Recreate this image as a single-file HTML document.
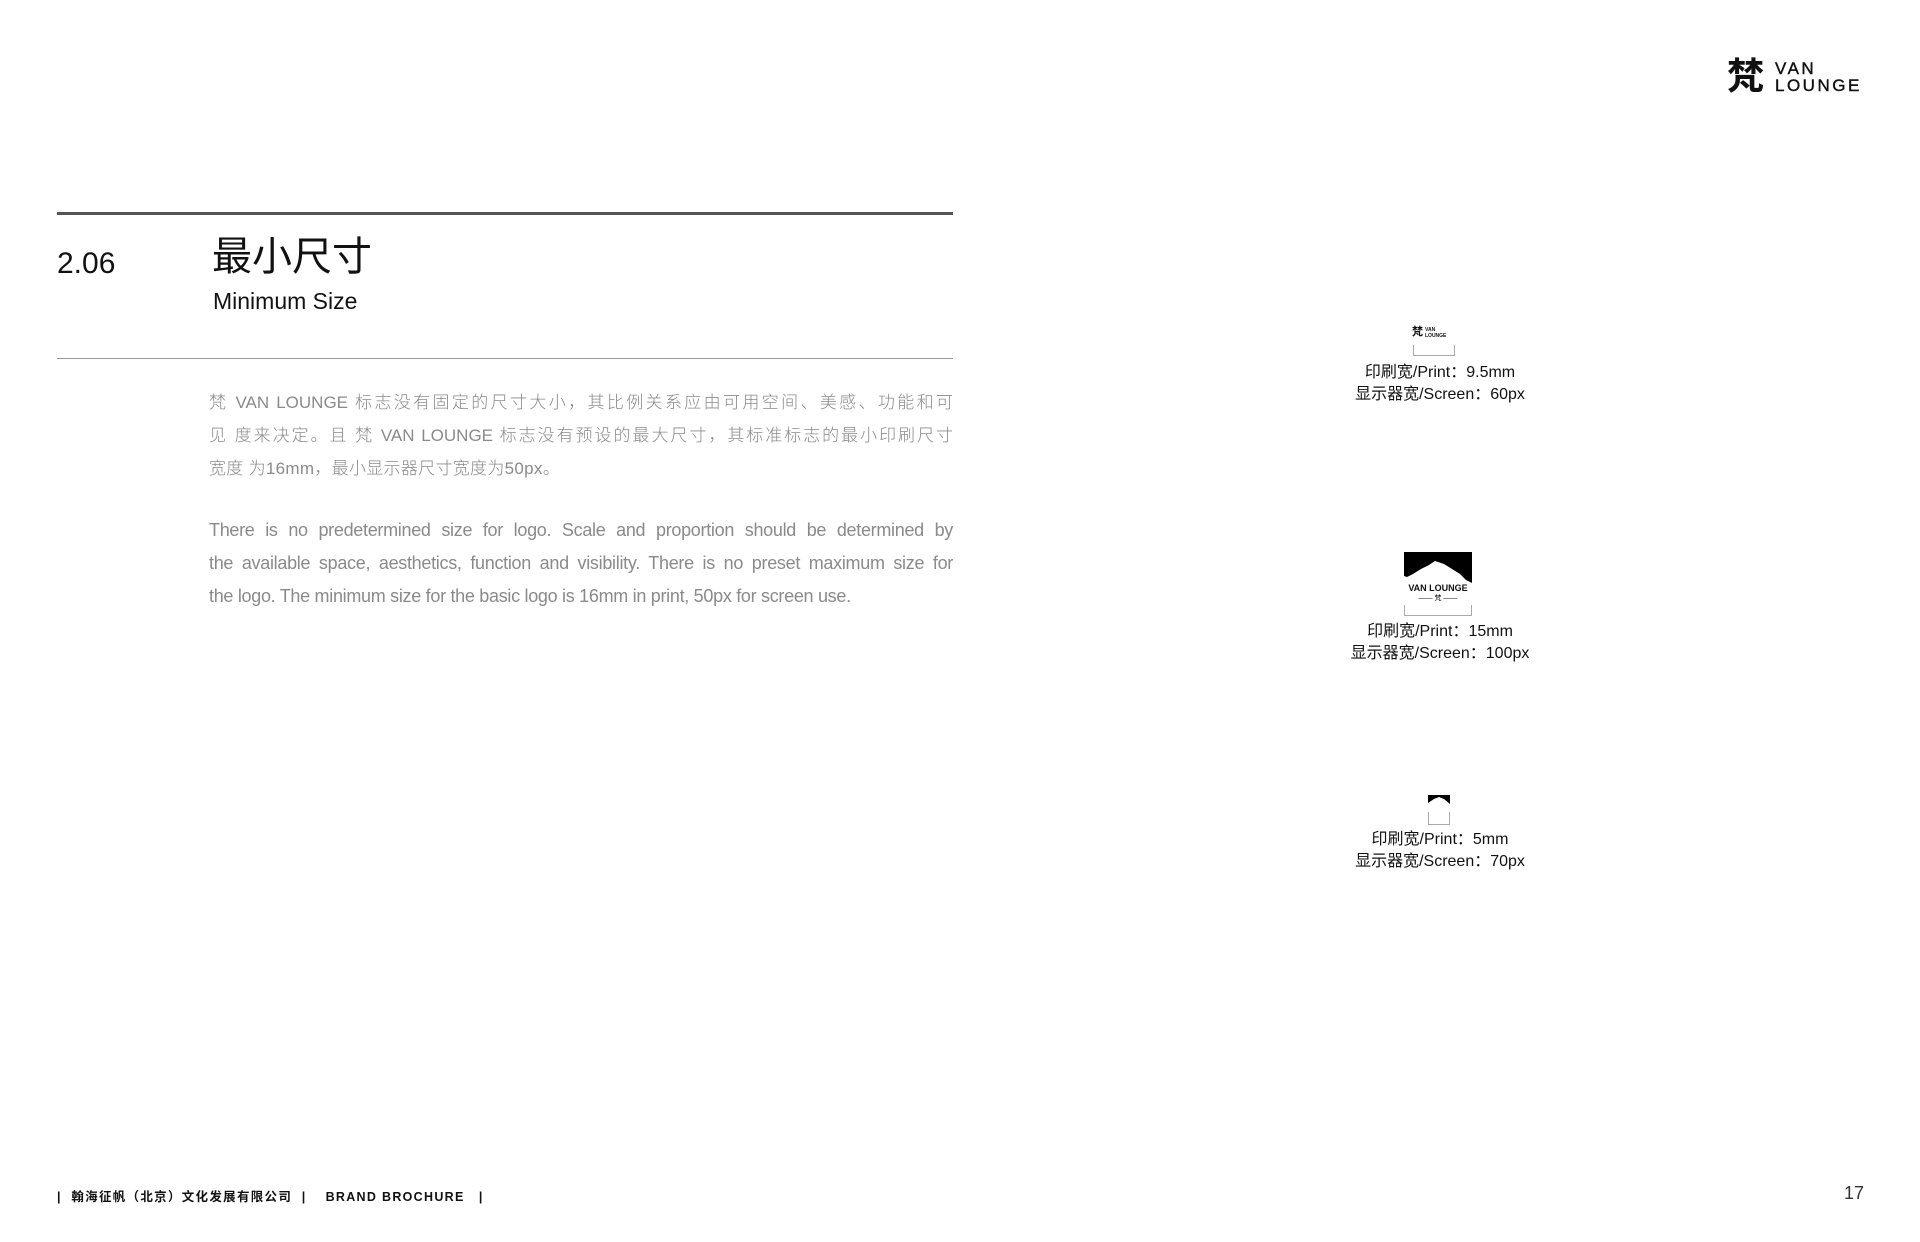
<!DOCTYPE html>
<html><head><meta charset="utf-8"><style>
*{margin:0;padding:0;box-sizing:border-box}
body{width:1920px;height:1242px;background:#fff;position:relative;overflow:hidden;font-family:"Liberation Sans","Noto Sans CJK SC",sans-serif;color:#111}
.a{position:absolute}
.cap{font-size:16px;color:#111;text-align:center;width:240px;left:1320px;line-height:22px}
.br{border:1px solid #aaa;border-top:none;height:11px}
.l{display:block;width:744px;text-align:justify;text-align-last:justify;white-space:nowrap;height:33px}
.cn{font-size:17px;line-height:33px;color:#8a8a8a;font-weight:300}
.en{font-size:18px;line-height:33px;color:#8a8a8a;letter-spacing:-0.3px}
</style></head><body>
<div class="a" style="left:1727px;top:58px;width:40px;height:38px;font-size:37px;font-weight:bold;line-height:38px">梵</div>
<div class="a" style="left:1775px;top:60px;font-size:17px;line-height:17px;letter-spacing:2.5px;font-weight:normal;-webkit-text-stroke:0.4px #111">VAN<br>LOUNGE</div>

<div class="a" style="left:57px;top:212px;width:896px;height:3px;background:#555"></div>
<div class="a" style="left:57px;top:247px;font-size:30px">2.06</div>
<div class="a" style="left:212px;top:234px;font-size:40px;line-height:46px">最小尺寸</div>
<div class="a" style="left:213px;top:288px;font-size:23px">Minimum Size</div>
<div class="a" style="left:57px;top:358px;width:896px;height:1px;background:#999"></div>

<div class="a cn" style="left:209px;top:386px;width:744px">
<div class="l" style="white-space:normal">梵 VAN LOUNGE 标志没有固定的尺寸大小，其比例关系应由可用空间、美感、功能和可</div>
<div class="l" style="white-space:normal">见 度来决定。且 梵 VAN LOUNGE 标志没有预设的最大尺寸，其标准标志的最小印刷尺寸</div>
<div style="height:33px;letter-spacing:0.3px">宽度 为16mm，最小显示器尺寸宽度为50px。</div>
</div>
<div class="a en" style="left:209px;top:514px;width:744px">
<div class="l" style="white-space:normal">There is no predetermined size for logo. Scale and proportion should be determined by</div>
<div class="l" style="white-space:normal">the available space, aesthetics, function and visibility. There is no preset maximum size for</div>
<div style="height:33px">the logo. The minimum size for the basic logo is 16mm in print, 50px for screen use.</div>
</div>

<div class="a" style="left:1412px;top:326px;font-size:11px;font-weight:bold;line-height:12px">梵</div>
<div class="a" style="left:1425px;top:327px;font-size:5px;line-height:6px;font-weight:bold">VAN<br>LOUNGE</div>
<div class="a br" style="left:1413px;top:345px;width:42px"></div>
<div class="a cap" style="top:362px">印刷宽/Print：9.5mm<br>显示器宽/Screen：60px</div>

<svg class="a" style="left:1404px;top:552px" width="68" height="31" viewBox="0 0 68 31"><path d="M0 0H68V31L62 28L56 22L48 17L40 12L31 9L25 13L17 17L9 22L3 25L0 24Z" fill="#000"/></svg>
<div class="a" style="left:1404px;top:583px;width:68px;text-align:center;font-size:9px;font-weight:bold">VAN LOUNGE</div>
<div class="a" style="left:1404px;top:594px;width:68px;text-align:center;font-size:7px;line-height:10px">—— 梵 ——</div>
<div class="a br" style="left:1404px;top:605px;width:68px"></div>
<div class="a cap" style="top:621px">印刷宽/Print：15mm<br>显示器宽/Screen：100px</div>

<svg class="a" style="left:1428px;top:795px" width="22" height="9" viewBox="0 0 22 9"><path d="M0 0H22V9L16 4L11 2L6 4L0 8Z" fill="#000"/></svg>
<div class="a br" style="left:1428px;top:812px;width:22px;height:13px"></div>
<div class="a cap" style="top:829px">印刷宽/Print：5mm<br>显示器宽/Screen：70px</div>

<div class="a" style="left:57px;top:1186px;font-size:12.5px;font-weight:bold;letter-spacing:1.3px;white-space:pre">|  翰海征帆（北京）文化发展有限公司  |    BRAND BROCHURE   |</div>
<div class="a" style="left:1844px;top:1183px;font-size:18px;color:#333">17</div>
</body></html>
